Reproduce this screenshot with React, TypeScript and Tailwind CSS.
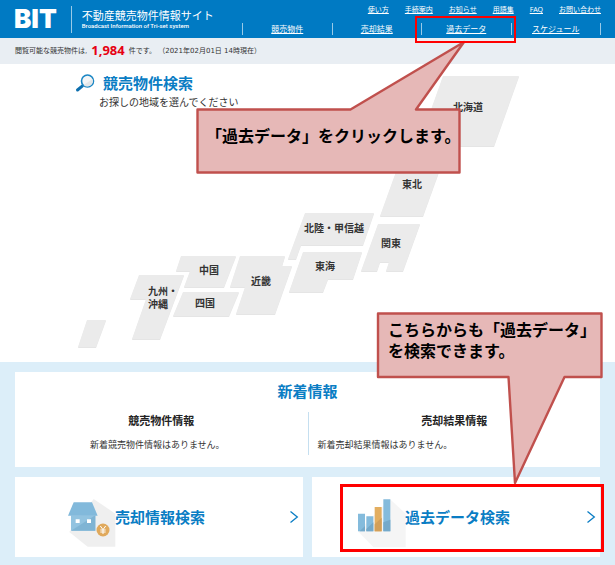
import { ReactNode } from 'react'
import clsx from 'clsx'

interface Region {
  name: string
  points: string
  label: string
}

const utilityLinks = ['使い方', '手続案内', 'お知らせ', '用語集', 'FAQ', 'お問い合わせ']

const navLinks = [
  { label: '競売物件' },
  { label: '売却結果' },
  { label: '過去データ', marked: true },
  { label: 'スケジュール' },
]

// Shapes share the map's own coordinate space, labels are pinned by their centre
const regions: Region[] = [
  { name: '北海道', points: '443,12 519,12 494,82 418,82', label: 'left-[468px] top-[43px]' },
  { name: '東北', points: '402,91 445,91 423,152 380,152', label: 'left-[412px] top-[120px]' },
  { name: '北陸・甲信越', points: '305,149 374,149 363,181 301,181 296,195 288,195', label: 'left-[334px] top-[164px]' },
  { name: '関東', points: '378,160 420,160 403,207 386,207 389,198 380,198 377,207 361,207', label: 'left-[391px] top-[179px]' },
  { name: '東海', points: '303,188 362,188 353,215 328,215 323,228 289,228', label: 'left-[325px] top-[202px]' },
  { name: '近畿', points: '240,192 285,192 282,202 292,202 275,250 236,250 245,223 230,223', label: 'left-[261px] top-[217px]' },
  { name: '中国', points: '181,192 236,192 224,223 184,223 190,207 176,207', label: 'left-[209px] top-[206px]' },
  { name: '四国', points: '183,228 239,228 229,252 173,252', label: 'left-[205px] top-[239px]' },
  { name: '九州・\n沖縄', points: '139,211 184,211 160,275 132,275 146,235 130,235', label: 'left-[163px] top-[234px]' },
]

function SearchIcon() {
  return (
    <svg viewBox="0 0 20 20" className="w-5 h-5 shrink-0" fill="none">
      <path d="M7.5 12.8 2.5 17" stroke="#0d6fae" strokeWidth="3" strokeLinecap="round" />
      <circle cx="12.5" cy="8" r="6" fill="#f3f5f6" stroke="#1a86c4" strokeWidth="1.6" />
      <path d="M8.6 12A5.6 5.6 0 0 0 17.6 6z" fill="#e3e6e8" />
    </svg>
  )
}

function HouseIcon() {
  return (
    <svg viewBox="200 415 150 150" className="w-[50px] h-[50px] shrink-0">
      <path d="M280 418 345 462V561H262L207 517z" fill="#efefef" />
      <path d="M212 467H285V513H212z" fill="#92c3e0" />
      <path d="M285 467V513H212z" fill="#7fb4d4" />
      <path d="M220 428H275L292 468H203z" fill="#82b9db" />
      <path d="M226 479H238V490H226zM260 479H272V490H260z" fill="#fff" />
      <circle cx="308" cy="511" r="19.5" fill="#e0a95c" />
      <path d="M300 499 308 510 316 499M308 510V523M300 511H316M300 517H316" fill="none" stroke="#fff" strokeWidth="3" />
    </svg>
  )
}

function ChartIcon() {
  return (
    <svg viewBox="155 113 150 150" className="w-[50px] h-[50px] shrink-0">
      <path d="M254 117 301 160V261H205L158 213z" fill="#f5f5f5" />
      <path d="M158 160H179V213H158zM183 168H204V213H183zM234 117H255V213H234z" fill="#84bbdc" />
      <path d="M208 140H229V213H208z" fill="#e3ae60" />
      <path d="M179 197V213H163zM204 186V213H183V206zM255 178V213H234V186z" fill="#74a9ca" />
      <path d="M229 172V213H208V192z" fill="#d39f58" />
    </svg>
  )
}

function Callout({ className, viewBox, points, children }: {
  className: string
  viewBox: string
  points: string
  children: ReactNode
}) {
  return (
    <div className={clsx('absolute z-20 pointer-events-none', className)}>
      <svg viewBox={viewBox} className="absolute inset-0 w-full h-full">
        <polygon points={points} fill="#e6b8b7" stroke="#c0504d" strokeWidth="2.4" strokeLinejoin="round" />
      </svg>
      <p className="relative text-[16px] leading-[21px] font-bold text-black whitespace-nowrap">{children}</p>
    </div>
  )
}

function SearchCard({ title, icon, className, children }: {
  title: string
  icon: ReactNode
  className: string
  children?: ReactNode
}) {
  return (
    <div className="relative flex-1">
      <a href="#" className={clsx('flex items-center h-20 bg-white pr-1', className)}>
        <span className="mt-3">{icon}</span>
        <span className="-ml-0.5 flex-1 text-[15px] font-bold text-[#0a7dc4]">{title}</span>
        <svg viewBox="0 0 10 14" className="w-[10px] h-[14px]" fill="none" stroke="#0a7dc4" strokeWidth="1.3">
          <path d="M1.5 1.5 8.3 7 1.5 12.5" />
        </svg>
      </a>
      {children}
    </div>
  )
}

export default function App() {
  return (
    <div className="overflow-hidden bg-white text-[#333] font-['Noto_Sans','Noto_Sans_CJK_JP',sans-serif]">
      <header className="relative flex justify-between h-[38px] bg-[#007ac3] px-[14px] text-white">
        <div className="flex items-center">
          <span className="font-['Inter',sans-serif] text-[26px] leading-none font-black">BIT</span>
          <span className="ml-[14px] mr-[10px] w-px h-[27px] bg-white/60" />
          <div>
            <h1 className="text-[11px] leading-[13px] whitespace-nowrap">不動産競売物件情報サイト</h1>
            <p className="font-['Roboto',sans-serif] text-[6px] leading-[8px] font-medium whitespace-nowrap">
              Broadcast Information of Tri-set system
            </p>
          </div>
        </div>

        <div className="flex flex-col items-end w-[359px]">
          <ul className="flex gap-4 pt-1 text-[7px] leading-[12px] whitespace-nowrap">
            {utilityLinks.map((label) => (
              <li key={label}>
                <a href="#" className="underline">{label}</a>
              </li>
            ))}
          </ul>
          <nav className="w-full pt-[7px]">
            <ul className="grid grid-cols-4 border-l border-white/60">
              {navLinks.map((link) => (
                <li key={link.label} className="relative border-r border-white/60 text-center text-[8px] leading-[12px]">
                  <a href="#" className="underline">{link.label}</a>
                  {link.marked && (
                    <span className="absolute -left-[7px] -right-[5px] -top-[7px] -bottom-2 z-30 border-2 border-[#ff0000]" />
                  )}
                </li>
              ))}
            </ul>
          </nav>
        </div>

        <Callout
          className="right-[149px] top-10 w-[270px] h-[134px] pt-[86px] pl-[10px]"
          viewBox="196 40 270 134"
          points="197.5,109.5 350.5,109.5 464,42 416,109.5 459.5,109.5 459.5,172.5 197.5,172.5"
        >
          「過去データ」をクリックします。
        </Callout>
      </header>

      <p className="flex items-center h-[26px] bg-[#e9eef3] px-[15px] font-['DejaVu_Sans','Noto_Sans_CJK_JP',sans-serif] text-[7px] whitespace-nowrap">
        閲覧可能な競売物件は,
        <strong className="mx-1 font-['Noto_Sans',sans-serif] text-[13px] text-[#e60012]">1,984</strong>
        件です。 （2021年02月01日 14時現在）
      </p>

      <section className="grid">
        <div className="[grid-area:1/1] pl-[75px] pt-2">
          <h2 className="flex items-center gap-2 text-[15px] leading-[22px] font-bold text-[#0a7dc4]">
            <SearchIcon />
            競売物件検索
          </h2>
          <p className="pl-6 text-[10px] leading-[16px]">お探しの地域を選んでください</p>
        </div>

        <div className="[grid-area:1/1] relative w-[615px] h-[298px] mx-auto">
          <svg viewBox="0 0 615 298" className="w-full h-full">
            <g fill="#ebebeb" className="drop-shadow-[0_1px_0px_rgba(0,0,0,0.1)]">
              {regions.map((region) => (
                <polygon key={region.name} points={region.points} />
              ))}
              <polygon points="87,256 106,256 96,283 78,283" />
            </g>
          </svg>
          {regions.map((region) => (
            <a
              key={region.name}
              href="#"
              className={clsx(
                'absolute -translate-x-1/2 -translate-y-1/2 whitespace-pre text-[10px] leading-[13px] font-bold',
                region.label
              )}
            >
              {region.name}
            </a>
          ))}
        </div>
      </section>

      <section className="flex flex-col gap-[10px] bg-[#dceef9] px-[15px] pt-[10px] pb-2">
        <div className="bg-white pt-2 pb-3">
          <h2 className="text-center text-[15px] leading-[22px] font-bold text-[#0a7dc4]">新着情報</h2>
          <div className="grid grid-cols-2 mt-[10px]">
            <div className="text-center">
              <h3 className="text-[11px] leading-[18px] font-bold text-[#222]">競売物件情報</h3>
              <p className="mt-[9px] mb-1 pr-2 text-[9px] leading-[12px]">新着競売物件情報はありません。</p>
            </div>
            <div className="border-l border-[#c5dff0]">
              <h3 className="text-center text-[11px] leading-[18px] font-bold text-[#222]">売却結果情報</h3>
              <p className="mt-[9px] mb-1 pl-[9px] text-[9px] leading-[12px]">新着売却結果情報はありません。</p>
            </div>
          </div>
        </div>

        <div className="flex gap-[9px]">
          <SearchCard title="売却情報検索" icon={<HouseIcon />} className="pl-[52px]" />
          <SearchCard title="過去データ検索" icon={<ChartIcon />} className="pl-[45px]">
            <span className="absolute left-7 -right-1 top-[7px] bottom-[5px] border-[3px] border-[#ff0000] pointer-events-none" />
            <Callout
              className="-right-[3px] -top-[165px] w-[227px] h-[174px] pt-2 pl-3"
              viewBox="376 312 227 174"
              points="378,313.5 601.5,313.5 601.5,377 564.5,377 515,483 508.5,377 378,377"
            >
              こちらからも「過去データ」
              <br />
              を検索できます。
            </Callout>
          </SearchCard>
        </div>
      </section>
    </div>
  )
}
